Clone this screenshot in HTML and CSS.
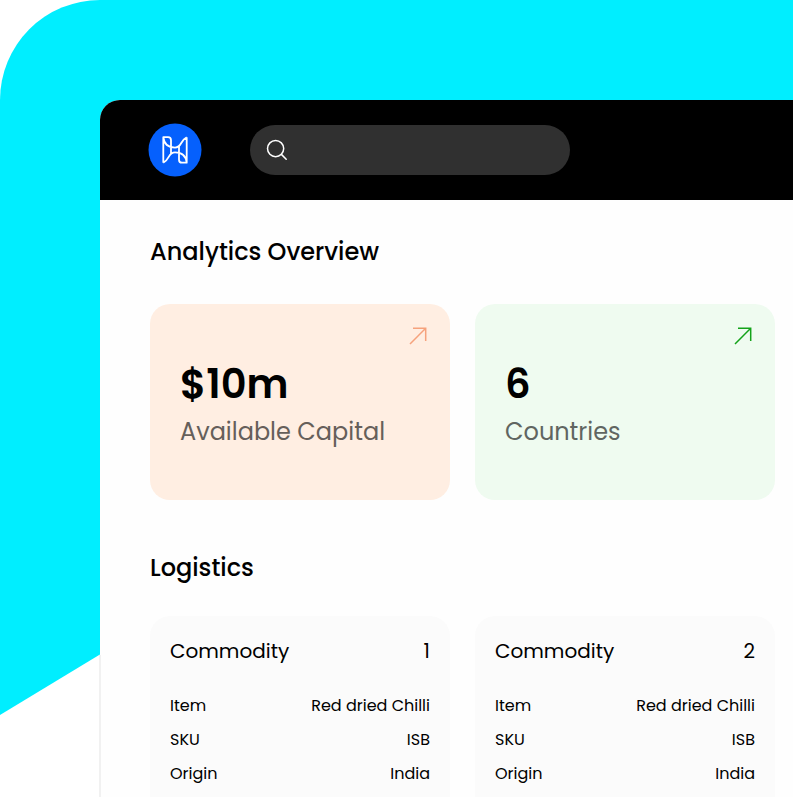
FILE: index.html
```html
<!DOCTYPE html>
<html lang="en">
<head>
<meta charset="utf-8">
<title>Analytics Overview</title>
<link rel="stylesheet" href="styles.css">
</head>
<body>
<div class="stage">
  <div class="backdrop"></div>
  <div class="window">
    <header class="topbar">
      <svg class="logo" viewBox="0 0 54 54" fill="none">
        <circle cx="27" cy="27" r="26.5" fill="#0560fd"/>
        <path d="M15.300 39.700V14.200H20Q23 14.200 23 17.200V30.500M38.700 14.200V39.700H34Q31 39.700 31 36.700V23.500M15.300 14.200C16 20.400 20 24.600 27 24.600C34 24.600 32 17.500 38.700 14.200M15.300 39.700C22 36.400 20 29.300 27 29.300C34 29.300 38 33.500 38.700 39.700" stroke="#fff" stroke-width="1.800" stroke-linejoin="round"/>
      </svg>
      <div class="search">
        <svg class="search-icon" viewBox="0 0 22 22" fill="none" stroke="#fff" stroke-width="1.500" stroke-linecap="round"><circle cx="9.600" cy="9.600" r="8.100"/><path d="m15.400 15.400 4.800 4.800"/></svg>
      </div>
    </header>
    <main class="content">
      <h2 class="heading">Analytics Overview</h2>
      <section class="cards">
        <article class="stat stat-capital">
          <svg class="arrow" viewBox="0 0 20 20"><path d="M2 18 17.700 2.300M5 2.300h12.700V15"/></svg>
          <div class="value">$10m</div>
          <div class="label">Available Capital</div>
        </article>
        <article class="stat stat-countries">
          <svg class="arrow" viewBox="0 0 20 20"><path d="M2 18 17.700 2.300M5 2.300h12.700V15"/></svg>
          <div class="value">6</div>
          <div class="label">Countries</div>
        </article>
      </section>
      <h2 class="heading heading-logistics">Logistics</h2>
      <section class="cards">
        <article class="commodity">
          <h3 class="title"><span>Commodity</span><span>1</span></h3>
          <div class="row"><span>Item</span><span>Red dried Chilli</span></div>
          <div class="row"><span>SKU</span><span>ISB</span></div>
          <div class="row"><span>Origin</span><span>India</span></div>
        </article>
        <article class="commodity">
          <h3 class="title"><span>Commodity</span><span>2</span></h3>
          <div class="row"><span>Item</span><span>Red dried Chilli</span></div>
          <div class="row"><span>SKU</span><span>ISB</span></div>
          <div class="row"><span>Origin</span><span>India</span></div>
        </article>
      </section>
    </main>
  </div>
</div>
</body>
</html>
```
FILE: styles.css
```css
* { box-sizing: border-box; }
body { margin: 0; background: #fff; color: #000; font-family: Poppins, Inter, sans-serif; overflow: hidden; }
.stage { position: relative; width: 793px; height: 797px; padding: 100px 0 0 100px; overflow: hidden; }
.backdrop { position: absolute; inset: 0; border-radius: 100px 0 0 0; background: #00eeff; clip-path: polygon(0 0, 100% 0, 100% 235px, 0 715px); }
.window { position: relative; height: 697px; background: #fefefe; border-radius: 20px 0 0; }
.window::before { content: ""; position: absolute; left: -1px; top: 555px; bottom: 0; width: 2px; background: #f1f1f1; }
.topbar { display: flex; align-items: center; height: 100px; padding-left: 48px; border-radius: 20px 0 0; background: #000; }
.logo { width: 54px; height: 54px; margin-right: 48px; }
.search { display: flex; align-items: center; width: 320px; height: 50px; padding-left: 16px; border-radius: 25px; background: #303030; }
.search-icon { width: 22px; height: 22px; }
.content { padding: 34px 18px 0 50px; }
.heading { margin: 0; font-size: 24px; line-height: 36px; font-weight: 500; white-space: nowrap; }
.cards { display: grid; grid-template-columns: 300px 300px; gap: 25px; margin-top: 34px; }
.stat { position: relative; height: 196px; padding: 50px 30px 0; border-radius: 20px; }
.stat-capital { background: #ffeee2; }
.stat-countries { background: #effbf0; }
.arrow { position: absolute; top: 22px; right: 22px; width: 20px; height: 20px; fill: none; stroke: #f6a27d; stroke-width: 1.5; }
.stat-countries .arrow { stroke: #14a31a; }
.value { font-size: 40px; line-height: 60px; font-weight: 600; }
.label { font-size: 24px; line-height: 36px; color: #606561; white-space: nowrap; }
.stat-capital .label { color: #665f5a; }
.heading-logistics { margin-top: 50px; }
.heading-logistics + .cards { margin-top: 30px; }
.commodity { height: 240px; padding: 20px; border-radius: 20px; background: #fbfbfb; }
.title { display: flex; justify-content: space-between; margin: 0 0 23px; font-size: 20px; line-height: 30px; font-weight: 400; }
.row { display: flex; justify-content: space-between; height: 34px; font-size: 16px; line-height: 34px; white-space: nowrap; }
```
